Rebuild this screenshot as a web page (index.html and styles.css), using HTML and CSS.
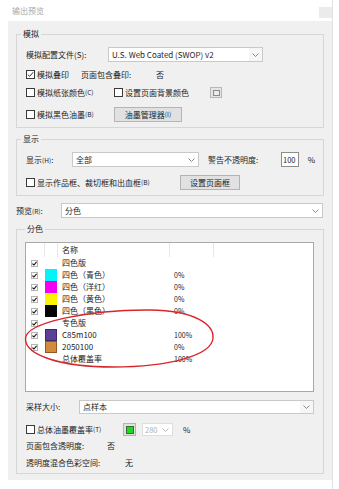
FILE: index.html
```html
<!DOCTYPE html>
<html lang="zh">
<head>
<meta charset="utf-8">
<title>输出预览</title>
<link rel="stylesheet" href="styles.css">
</head>
<body>
<div class="screen">
  <div class="main">
    <div class="titlebar">
      <span class="title">输出预览</span>
      <span class="corner"></span>
    </div>
    <div class="dialog">
      <div class="group g-sim">
        <span class="legend">模拟</span>
        <div class="row r-h15">
          <span class="label w82">模拟配置文件(S):</span>
          <div class="select w155"><span class="val">U.S. Web Coated (SWOP) v2</span><span class="arrow shade"><svg width="7" height="4" viewBox="0 0 7 4"><path d="M0.5 0.5 L3.5 3.5 L6.5 0.5" fill="none" stroke="#8a8a8a" stroke-width="1"/></svg></span></div>
        </div>
        <div class="row r-h15 mt5">
          <span class="check w55"><span class="cb"><svg width="7" height="7" viewBox="0 0 7 7"><path d="M0.8 3.6 L2.7 5.4 L6.2 1.2" fill="none" stroke="#333" stroke-width="1"/></svg></span>模拟叠印</span>
          <span class="label w75">页面包含叠印:</span>
          <span class="label">否</span>
        </div>
        <div class="row r-h15 mt3">
          <span class="check w88"><span class="cb"></span>模拟纸张颜色<small>(C)</small></span>
          <span class="check w96"><span class="cb"></span>设置页面背景颜色</span>
          <span class="colorbtn"><span class="inner"></span></span>
        </div>
        <div class="row r-h15 mt7">
          <span class="check w88"><span class="cb"></span>模拟黑色油墨<small>(B)</small></span>
          <span class="btn w68">油墨管理器<small>(I)</small></span>
        </div>
      </div>

      <div class="group g-show">
        <span class="legend">显示</span>
        <div class="row r-h15">
          <span class="label w46">显示<small>(H)</small>:</span>
          <div class="select w127"><span class="val">全部</span><span class="arrow"><svg width="7" height="4" viewBox="0 0 7 4"><path d="M0.5 0.5 L3.5 3.5 L6.5 0.5" fill="none" stroke="#8a8a8a" stroke-width="1"/></svg></span></div>
          <span class="label ml9 w73">警告不透明度:</span>
          <span class="num">100</span>
          <span class="label ml9">%</span>
        </div>
        <div class="row r-h15 mt8">
          <span class="check w154"><span class="cb"></span>显示作品框、裁切框和出血框<small>(B)</small></span>
          <span class="btn w60">设置页面框</span>
        </div>
      </div>

      <div class="row r-h15 mt7 preview">
        <span class="label w45">预览<small>(R)</small>:</span>
        <div class="select w262"><span class="val">分色</span><span class="arrow"><svg width="7" height="4" viewBox="0 0 7 4"><path d="M0.5 0.5 L3.5 3.5 L6.5 0.5" fill="none" stroke="#8a8a8a" stroke-width="1"/></svg></span></div>
      </div>

      <div class="group g-sep">
        <span class="legend lg-sep">分色</span>
        <div class="list">
          <div class="lrow head">
            <span class="c-cb"></span><span class="c-sw"></span><span class="c-name">名称</span><span class="c-pct"></span><span class="c-rest"></span>
          </div>
          <div class="lrow">
            <span class="c-cb"><span class="lcb"><svg width="5" height="5" viewBox="0 0 5 5"><path d="M0.4 2.6 L1.9 4 L4.6 0.8" fill="none" stroke="#111" stroke-width="1.1"/></svg></span></span><span class="c-sw"></span><span class="c-name">四色版</span><span class="c-pct"></span>
          </div>
          <div class="lrow">
            <span class="c-cb"><span class="lcb"><svg width="5" height="5" viewBox="0 0 5 5"><path d="M0.4 2.6 L1.9 4 L4.6 0.8" fill="none" stroke="#111" stroke-width="1.1"/></svg></span></span><span class="c-sw"><span class="sw cyan"></span></span><span class="c-name">四色（青色）</span><span class="c-pct">0%</span>
          </div>
          <div class="lrow">
            <span class="c-cb"><span class="lcb"><svg width="5" height="5" viewBox="0 0 5 5"><path d="M0.4 2.6 L1.9 4 L4.6 0.8" fill="none" stroke="#111" stroke-width="1.1"/></svg></span></span><span class="c-sw"><span class="sw magenta"></span></span><span class="c-name">四色（洋红）</span><span class="c-pct">0%</span>
          </div>
          <div class="lrow">
            <span class="c-cb"><span class="lcb"><svg width="5" height="5" viewBox="0 0 5 5"><path d="M0.4 2.6 L1.9 4 L4.6 0.8" fill="none" stroke="#111" stroke-width="1.1"/></svg></span></span><span class="c-sw"><span class="sw yellow"></span></span><span class="c-name">四色（黄色）</span><span class="c-pct">0%</span>
          </div>
          <div class="lrow">
            <span class="c-cb"><span class="lcb"><svg width="5" height="5" viewBox="0 0 5 5"><path d="M0.4 2.6 L1.9 4 L4.6 0.8" fill="none" stroke="#111" stroke-width="1.1"/></svg></span></span><span class="c-sw"><span class="sw black"></span></span><span class="c-name">四色（黑色）</span><span class="c-pct">0%</span>
          </div>
          <div class="lrow">
            <span class="c-cb"><span class="lcb"><svg width="5" height="5" viewBox="0 0 5 5"><path d="M0.4 2.6 L1.9 4 L4.6 0.8" fill="none" stroke="#111" stroke-width="1.1"/></svg></span></span><span class="c-sw"></span><span class="c-name">专色版</span><span class="c-pct"></span>
          </div>
          <div class="lrow">
            <span class="c-cb"><span class="lcb"><svg width="5" height="5" viewBox="0 0 5 5"><path d="M0.4 2.6 L1.9 4 L4.6 0.8" fill="none" stroke="#111" stroke-width="1.1"/></svg></span></span><span class="c-sw"><span class="sw purple"></span></span><span class="c-name">C85m100</span><span class="c-pct">100%</span>
          </div>
          <div class="lrow">
            <span class="c-cb"><span class="lcb"><svg width="5" height="5" viewBox="0 0 5 5"><path d="M0.4 2.6 L1.9 4 L4.6 0.8" fill="none" stroke="#111" stroke-width="1.1"/></svg></span></span><span class="c-sw"><span class="sw orange"></span></span><span class="c-name">2050100</span><span class="c-pct">0%</span>
          </div>
          <div class="lrow">
            <span class="c-cb"></span><span class="c-sw"></span><span class="c-name">总体覆盖率</span><span class="c-pct">100%</span>
          </div>
        </div>

        <div class="row r-h14 mt8 ind1">
          <span class="label w53">采样大小:</span>
          <div class="select w235"><span class="val">点样本</span><span class="arrow shade"><svg width="7" height="4" viewBox="0 0 7 4"><path d="M0.5 0.5 L3.5 3.5 L6.5 0.5" fill="none" stroke="#8a8a8a" stroke-width="1"/></svg></span></div>
        </div>
        <div class="row r-h13 mt9 ind1">
          <span class="check w97"><span class="cb"></span>总体油墨覆盖率<small>(T)</small></span>
          <span class="greenbtn"><span class="inner"></span></span>
          <span class="spin"><span class="val">280</span><svg width="7" height="4" viewBox="0 0 7 4"><path d="M0.5 0.5 L3.5 3.5 L6.5 0.5" fill="none" stroke="#b8b8b8" stroke-width="1"/></svg></span>
          <span class="label ml10">%</span>
        </div>
        <div class="row r-h12 mt4 ind1">
          <span class="label w81">页面包含透明度:</span>
          <span class="label">否</span>
        </div>
        <div class="row r-h12 mt5 ind1">
          <span class="label w99">透明度混合色彩空间:</span>
          <span class="label">无</span>
        </div>
      </div>
    </div>
  </div>
  <div class="edge"></div>
  <svg class="annot" width="339" height="489" viewBox="0 0 339 489">
    <path d="M25.5 339 C25 322 92 309.5 150 310 C196 310.5 214 325 213 338 C212 355 170 367 113 367 C60 367 25.5 355 25.5 339 Z" fill="none" stroke="#d8262b" stroke-width="1.4"/>
  </svg>
</div>
</body>
</html>
```

FILE: styles.css
```css
* { box-sizing: border-box; }

html, body {
  margin: 0;
  padding: 0;
  background: #ffffff;
}

body {
  font-family: "Noto Sans CJK SC", "Noto Sans", sans-serif;
  font-size: 8px;
  color: #222222;
  line-height: 1;
}

.screen {
  position: relative;
  display: flex;
  width: 339px;
  height: 489px;
  overflow: hidden;
}

.main {
  width: 332px;
  display: flex;
  flex-direction: column;
}

.edge {
  width: 7px;
  border-left: 1px solid #e2e2e2;
}

.titlebar {
  height: 21px;
  display: flex;
  justify-content: space-between;
  align-items: flex-start;
  padding-left: 12px;
}

.title {
  margin-top: 7px;
  font-size: 8px;
  color: #a8a8a8;
}

.corner {
  width: 13px;
  height: 11px;
  margin-top: 7px;
  background: #ebebeb;
}

.dialog {
  margin-left: 8px;
  width: 324px;
  height: 459px;
  background: #f0f0f0;
  padding: 13px 8px 0 8px;
  display: flex;
  flex-direction: column;
}

.group {
  position: relative;
  border: 1px solid #d6d6d6;
  display: flex;
  flex-direction: column;
}

.g-sim { padding: 12px 8px 5px 9px; }
.g-show { margin-top: 11px; padding: 12px 8px 5px 9px; }
.g-sep { margin-top: 11px; padding: 12px 9px 4px 8px; }

.legend {
  position: absolute;
  top: -6px;
  left: 4px;
  height: 10px;
  line-height: 10px;
  padding: 0 2px;
  background: #f0f0f0;
}

.lg-sep { left: 8px; }

.row {
  display: flex;
  align-items: center;
  white-space: nowrap;
}

.r-h15 { height: 15px; }
.r-h14 { height: 14px; }
.r-h13 { height: 13px; }
.r-h12 { height: 12px; }

.mt3 { margin-top: 3px; }
.mt4 { margin-top: 4px; }
.mt5 { margin-top: 5px; }
.mt7 { margin-top: 7px; }
.mt8 { margin-top: 8px; }
.mt9 { margin-top: 9px; }
.ml9 { margin-left: 9px; }
.ml10 { margin-left: 10px; }
.ind1 { padding-left: 1px; }

.label { flex: none; }

small { font-size: 6.5px; }

.w45 { width: 45px; }
.w46 { width: 46px; }
.w53 { width: 53px; }
.w55 { width: 55px; }
.w60 { width: 60px; }
.w68 { width: 68px; }
.w73 { width: 73px; }
.w75 { width: 75px; }
.w81 { width: 81px; }
.w82 { width: 82px; }
.w88 { width: 88px; }
.w96 { width: 96px; }
.w97 { width: 97px; }
.w99 { width: 99px; }
.w127 { width: 127px; }
.w154 { width: 154px; }
.w155 { width: 155px; }
.w235 { width: 235px; }
.w262 { width: 262px; }

.check {
  display: flex;
  align-items: center;
  flex: none;
}

.cb {
  width: 9px;
  height: 9px;
  border: 1px solid #3a3a3a;
  background: #ffffff;
  margin-right: 2px;
  display: flex;
  align-items: center;
  justify-content: center;
  flex: none;
}

.select {
  flex: none;
  height: 100%;
  background: #ffffff;
  border: 1px solid #c9c9c9;
  display: flex;
  align-items: center;
}

.select .val {
  flex: 1;
  padding-left: 3px;
  color: #1e1e1e;
}

.select .arrow {
  width: 13px;
  height: 100%;
  display: flex;
  align-items: center;
  justify-content: center;
}

.select .arrow.shade { background: #f6f6f6; }

.btn {
  flex: none;
  height: 100%;
  background: #e1e1e1;
  border: 1px solid #b4b4b4;
  display: flex;
  align-items: center;
  justify-content: center;
  color: #222;
}

.colorbtn {
  width: 12px;
  height: 11px;
  background: #e6e6e6;
  border: 1px solid #b8b8b8;
  display: flex;
  align-items: center;
  justify-content: center;
}

.colorbtn .inner {
  width: 7px;
  height: 6px;
  border: 1px solid #8a8a8a;
  background: #ececec;
}

.num {
  width: 18px;
  height: 100%;
  background: #ffffff;
  border: 1px solid #8c8c8c;
  display: flex;
  align-items: center;
  padding-left: 1px;
  font-size: 7.5px;
}

.preview { flex: none; }

.list {
  width: 289px;
  height: 150px;
  background: #ffffff;
  border: 1px solid #a9a9a9;
  display: flex;
  flex-direction: column;
}

.lrow {
  display: flex;
  height: 12px;
  align-items: center;
  white-space: nowrap;
}

.lrow.head {
  height: 14px;
  align-items: stretch;
}

.lrow.head > span {
  border-right: 1px solid #e6e6e6;
  display: flex;
  align-items: center;
}

.lrow.head > .c-rest { border-right: none; }

.c-cb {
  width: 19px;
  height: 100%;
  display: flex;
  align-items: center;
  padding-left: 5px;
  flex: none;
}

.c-sw {
  width: 13px;
  height: 100%;
  flex: none;
}

.c-name {
  width: 112px;
  padding-left: 4px;
  flex: none;
}

.c-pct {
  width: 44px;
  padding-left: 4px;
  font-size: 7px;
  flex: none;
}

.c-rest { flex: 1; }

.lcb {
  width: 7px;
  height: 7px;
  border: 1px solid #b5b5b5;
  background: #fafafa;
  display: flex;
  align-items: center;
  justify-content: center;
}

.sw {
  display: block;
  width: 12px;
  height: 12px;
}

.cyan { background: #00f5f8; }
.magenta { background: #f500f2; }
.yellow { background: #fbf400; }
.black { background: #050505; }
.purple { background: #5c3f97; border: 1px solid #3b2a6a; }
.orange { background: #d28a3c; border: 1px solid #8e5a26; }

.greenbtn {
  width: 13px;
  height: 13px;
  margin-left: 0;
  background: #e1e1e1;
  border: 1px solid #b4b4b4;
  display: flex;
  align-items: center;
  justify-content: center;
  flex: none;
}

.greenbtn .inner {
  width: 8px;
  height: 8px;
  background: #1fd81f;
  border: 1px solid #2f6f2f;
}

.spin {
  margin-left: 6px;
  width: 31px;
  height: 13px;
  background: #ffffff;
  border: 1px solid #dedede;
  display: flex;
  align-items: center;
  justify-content: space-between;
  padding: 0 3px 0 2px;
  color: #b0b0b0;
  font-size: 7.5px;
  flex: none;
}

.annot {
  position: absolute;
  left: 0;
  top: 0;
  pointer-events: none;
}
```
